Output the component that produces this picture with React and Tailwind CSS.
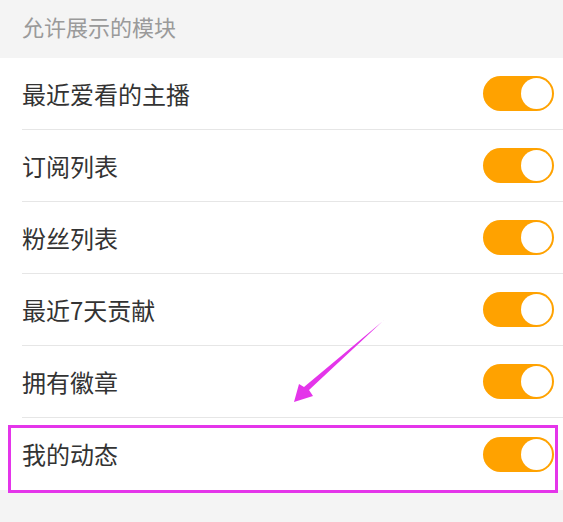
import React from "react";

const items = ["最近爱看的主播", "订阅列表", "粉丝列表", "最近7天贡献", "拥有徽章", "我的动态"];

function Toggle() {
  return (
    <div className="w-[71px] h-[35px] rounded-full bg-[#ffa200] flex items-center justify-end pr-[2px]">
      <div className="w-[31px] h-[31px] rounded-full bg-white" />
    </div>
  );
}

export default function App() {
  return (
    <div
      className="relative w-[563px] h-[522px] bg-[#f4f4f4] overflow-hidden"
      style={{ fontFamily: '"Noto Sans CJK SC", "Noto Sans", sans-serif' }}
    >
      <div className="h-[58px] flex items-center pl-[22px] text-[22px] text-[#9a9a9a] pb-[6px]">
        允许展示的模块
      </div>
      <div className="bg-white pl-[22px]">
        {items.map((t, i) => (
          <div
            key={t}
            className={
              "h-[72px] flex items-center justify-between pr-[9px] " +
              (i < items.length - 1 ? "border-b border-[#e6e6e6]" : "")
            }
          >
            <span className="text-[24px] text-[#333333] leading-none">{t}</span>
            <Toggle />
          </div>
        ))}
      </div>
      <div className="absolute left-[8px] top-[425px] w-[550px] h-[68px] border-[3px] border-[#e435ea]" />
      <svg className="absolute left-0 top-0" width="563" height="522">
        <polygon
          points="384,320 309,390 313,396 294,402 299,384 304,387 383,321"
          fill="#e435ea"
        />
      </svg>
    </div>
  );
}
